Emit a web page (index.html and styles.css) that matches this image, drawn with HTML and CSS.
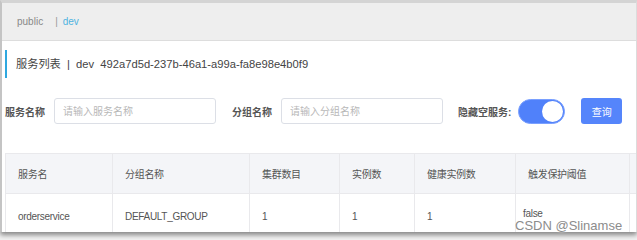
FILE: index.html
```html
<!DOCTYPE html>
<html lang="zh-CN">
<head>
    <meta charset="UTF-8">
    <meta name="viewport" content="width=device-width, initial-scale=1.0">
    <title>服务列表</title>
    <link rel="stylesheet" href="styles.css">
</head>
<body>

<div class="window">
    <div class="ns-bar">
        <span class="ns">public</span>
        <span class="ns-sep">|</span>
        <span class="ns active">dev</span>
    </div>

    <div class="main">
        <h2 class="title">服务列表 &nbsp;|&nbsp; dev&nbsp; 492a7d5d-237b-46a1-a99a-fa8e98e4b0f9</h2>

        <div class="filters">
            <label class="label">服务名称</label>
            <input class="field" type="text" placeholder="请输入服务名称">
            <label class="label gap">分组名称</label>
            <input class="field" type="text" placeholder="请输入分组名称">
            <label class="label gap tight">隐藏空服务:</label>
            <span class="switch"><span class="knob"></span></span>
            <button class="btn" type="button">查询</button>
        </div>

        <table>
            <colgroup>
                <col class="c1">
                <col class="c2">
                <col class="c3">
                <col class="c4">
                <col class="c5">
                <col class="c6">
                <col class="c7">
            </colgroup>
            <thead>
                <tr>
                    <th>服务名</th>
                    <th>分组名称</th>
                    <th>集群数目</th>
                    <th>实例数</th>
                    <th>健康实例数</th>
                    <th>触发保护阈值</th>
                    <th></th>
                </tr>
            </thead>
            <tbody>
                <tr>
                    <td>orderservice</td>
                    <td>DEFAULT_GROUP</td>
                    <td>1</td>
                    <td>1</td>
                    <td>1</td>
                    <td class="flag">false</td>
                    <td></td>
                </tr>
            </tbody>
        </table>
    </div>
</div>

<!-- watermark over the screenshot -->
<div class="watermark">CSDN @Slinamse</div>

</body>
</html>
```

FILE: styles.css
```css
body {
    margin: 0;
    width: 637px;
    height: 240px;
    overflow: hidden;
    background-color: #f2f2f2;
    font-family: "Liberation Sans", "Noto Sans CJK SC", sans-serif;
    color: #555;
    position: relative;
}
.window {
    width: 634px;
    height: 229px;
    background-color: #fff;
    border-top: 3px solid #d4d4d4;
    border-left: 2px solid #c4c4c4;
    border-right: 1px solid #dcdcdc;
    box-shadow: 0 3px 5px rgba(0, 0, 0, 0.45);
    overflow: hidden;
}
.ns-bar {
    height: 37px;
    background-color: #eeeeee;
    border-bottom: 1px solid #dddddd;
    display: flex;
    align-items: center;
    padding-left: 15px;
    font-size: 10px;
    color: #888;
}
.ns-sep {
    margin-left: 12px;
    margin-right: 5px;
    color: #999;
}
.ns.active {
    color: #4fb3e0;
}
.main {
    padding-left: 3px;
}
.title {
    margin: 9px 0 0 0;
    height: 28px;
    line-height: 28px;
    border-left: 2px solid #2fa8df;
    padding-left: 9px;
    font-size: 11.2px;
    font-weight: normal;
    color: #444;
}
.filters {
    margin-top: 20px;
    display: flex;
    align-items: center;
    height: 26px;
}
.label {
    font-size: 10px;
    font-weight: bold;
    color: #555;
    margin-right: 9px;
}
.label.gap {
    margin-left: 16px;
}
.label.tight {
    margin-left: 15px;
    margin-right: 7px;
}
.field {
    box-sizing: border-box;
    width: 162px;
    height: 26px;
    border: 1px solid #dcdfe6;
    border-radius: 3px;
    padding: 0 8px;
    font-family: inherit;
    font-size: 10px;
    color: #555;
    outline: none;
}
.field::placeholder {
    color: #b8b8b8;
}
.switch {
    box-sizing: border-box;
    width: 47px;
    height: 25px;
    border-radius: 13px;
    background-color: #5081fa;
    border: 1px solid #7aa0ff;
    display: flex;
    justify-content: flex-end;
    align-items: center;
    padding-right: 1px;
}
.knob {
    width: 21px;
    height: 21px;
    border-radius: 50%;
    background-color: #fff;
}
.btn {
    margin-left: 16px;
    width: 41px;
    height: 26px;
    border: none;
    border-radius: 3px;
    background-color: #5585fb;
    color: #fff;
    font-family: inherit;
    font-size: 10px;
    padding: 0;
}
table {
    margin-top: 29px;
    width: 644px;
    border-collapse: collapse;
    table-layout: fixed;
    font-size: 10px;
    letter-spacing: -0.3px;
}
.c1 { width: 107px; }
.c2 { width: 137px; }
.c3 { width: 90px; }
.c4 { width: 75px; }
.c5 { width: 101px; }
.c6 { width: 114px; }
.c7 { width: 20px; }
th, td {
    border: 1px solid #e9e9ec;
    text-align: left;
    padding: 0 0 0 12px;
    white-space: nowrap;
    overflow: hidden;
}
th {
    height: 39px;
    background-color: #f4f5f8;
    font-weight: normal;
    color: #555;
}
td {
    height: 38px;
    color: #555;
}
.flag {
    padding-left: 7px;
    padding-bottom: 6px;
}
.watermark {
    position: absolute;
    left: 515px;
    top: 218px;
    font-family: "Liberation Sans", Arial, sans-serif;
    font-size: 13px;
    color: #8c8c8c;
    text-shadow: 0 0 2px #fff;
}
```
